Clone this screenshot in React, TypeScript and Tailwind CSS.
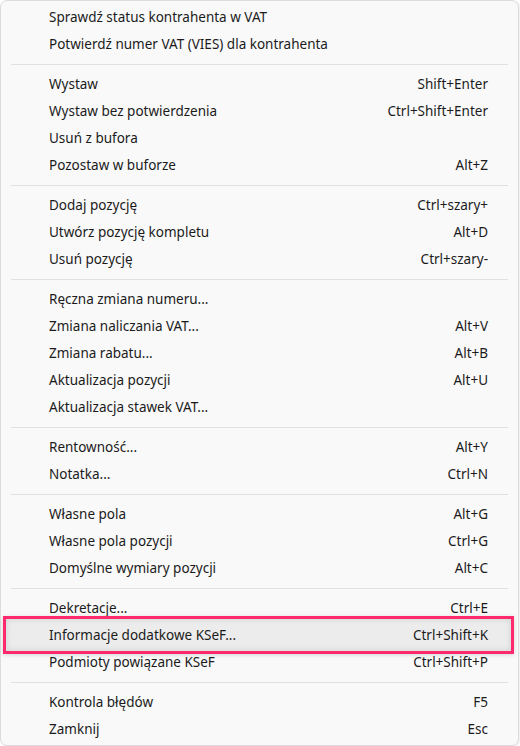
import React from "react";

type Item = { label: string; shortcut?: string; active?: boolean };
type Group = Item[];

const groups: Group[] = [
  [
    { label: "Sprawdź status kontrahenta w VAT" },
    { label: "Potwierdź numer VAT (VIES) dla kontrahenta" },
  ],
  [
    { label: "Wystaw", shortcut: "Shift+Enter" },
    { label: "Wystaw bez potwierdzenia", shortcut: "Ctrl+Shift+Enter" },
    { label: "Usuń z bufora" },
    { label: "Pozostaw w buforze", shortcut: "Alt+Z" },
  ],
  [
    { label: "Dodaj pozycję", shortcut: "Ctrl+szary+" },
    { label: "Utwórz pozycję kompletu", shortcut: "Alt+D" },
    { label: "Usuń pozycję", shortcut: "Ctrl+szary-" },
  ],
  [
    { label: "Ręczna zmiana numeru..." },
    { label: "Zmiana naliczania VAT...", shortcut: "Alt+V" },
    { label: "Zmiana rabatu...", shortcut: "Alt+B" },
    { label: "Aktualizacja pozycji", shortcut: "Alt+U" },
    { label: "Aktualizacja stawek VAT..." },
  ],
  [
    { label: "Rentowność...", shortcut: "Alt+Y" },
    { label: "Notatka...", shortcut: "Ctrl+N" },
  ],
  [
    { label: "Własne pola", shortcut: "Alt+G" },
    { label: "Własne pola pozycji", shortcut: "Ctrl+G" },
    { label: "Domyślne wymiary pozycji", shortcut: "Alt+C" },
  ],
  [
    { label: "Dekretacje...", shortcut: "Ctrl+E" },
    { label: "Informacje dodatkowe KSeF...", shortcut: "Ctrl+Shift+K", active: true },
    { label: "Podmioty powiązane KSeF", shortcut: "Ctrl+Shift+P" },
  ],
  [{ label: "Kontrola błędów", shortcut: "F5" }, { label: "Zamknij", shortcut: "Esc" }],
];

function Row({ item }: { item: Item }) {
  return (
    <div className="relative flex h-[27px] items-center pl-[48px] pr-[30px]">
      {item.active && (
        <div className="pointer-events-none absolute left-[2px] right-[4px] top-[-6px] bottom-[-5px] border-[3px] border-[#ff2a6d] bg-[#ececec] shadow-[inset_0_0_6px_rgba(0,0,0,0.12),0_1px_4px_rgba(0,0,0,0.15)]" />
      )}
      <span className="relative flex-1 whitespace-nowrap">{item.label}</span>
      {item.shortcut && <span className="relative whitespace-nowrap">{item.shortcut}</span>}
    </div>
  );
}

export default function App() {
  return (
    <div className="bg-white w-[520px] h-[746px]">
      <div
        className="w-[519px] rounded-[7px] border border-[#dcdcdc] bg-[#f9f9f9] pt-[3px] pb-[2px] text-[13.5px] text-[#1b1b1b] shadow-[1px_1px_3px_rgba(0,0,0,0.08)]"
        style={{ fontFamily: '"Noto Sans", "Open Sans", sans-serif' }}
      >
        {groups.map((g, gi) => (
          <div key={gi}>
            {gi > 0 && (
              <div className="flex h-[13px] items-center pl-[10px] pr-[10px]">
                <div className="h-px w-full bg-[#e1e1e1]" />
              </div>
            )}
            {g.map((it) => (
              <Row key={it.label} item={it} />
            ))}
          </div>
        ))}
      </div>
    </div>
  );
}
